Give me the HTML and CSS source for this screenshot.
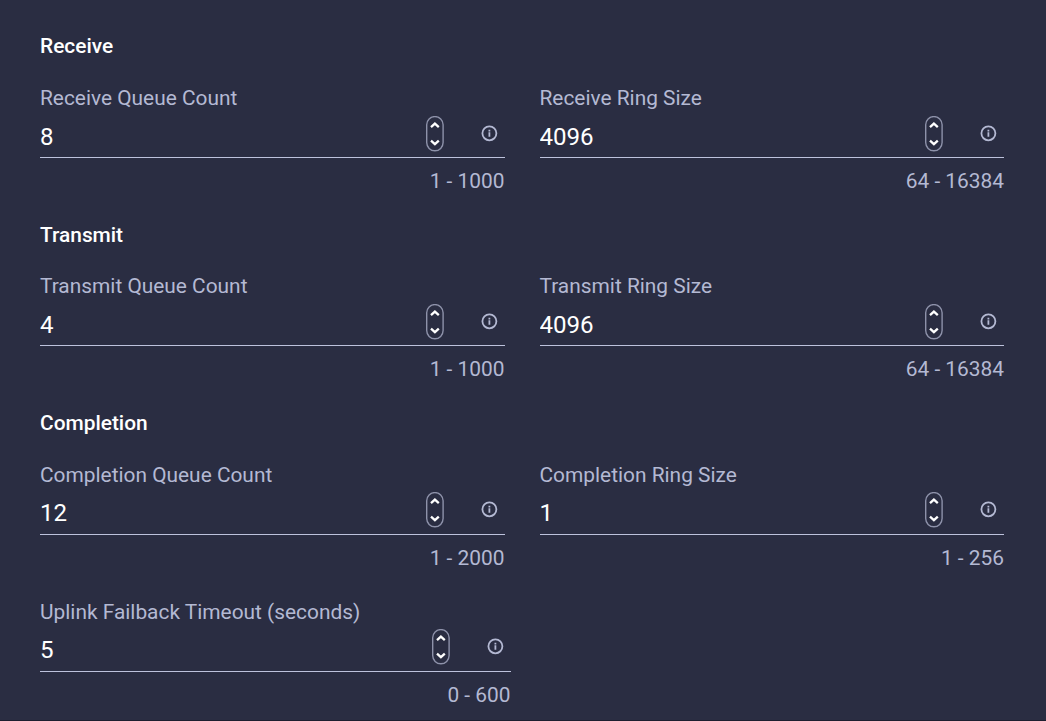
FILE: index.html
```html
<!DOCTYPE html>
<html lang="en">
<head>
    <meta charset="UTF-8">
    <meta name="viewport" content="width=device-width, initial-scale=1.0">
    <title>Adapter Settings</title>
    <link rel="stylesheet" href="styles.css">
</head>
<body>
    <!-- shared icons -->
    <svg class="sprite">
        <symbol id="spinner" viewBox="0 0 18 36">
            <rect x="0.7" y="0.6" width="16.4" height="34.2" rx="8.2" fill="none" stroke="#8e92aa" stroke-width="1.4"/>
            <path d="M5 11.2 L8.9 7.6 L12.8 11.2 M5 24.6 L8.9 28.2 L12.8 24.6" fill="none" stroke="#fff" stroke-width="2.3"/>
        </symbol>
        <symbol id="info" viewBox="0 0 16 16">
            <circle cx="7.4" cy="7.3" r="7" fill="none" stroke="#b4b9d3" stroke-width="1.8"/>
            <path d="M7.4 3.8 V5.4 M7.4 6.2 V10.8" fill="none" stroke="#b4b9d3" stroke-width="1.8"/>
        </symbol>
    </svg>

    <form class="settings">
        <section class="group">
            <h2>Receive</h2>
            <div class="row">
                <div class="field">
                    <label for="rxCount">Receive Queue Count</label>
                    <div class="control">
                        <input type="text" id="rxCount" value="8">
                        <svg class="spinner"><use href="#spinner"/></svg>
                        <svg class="info"><use href="#info"/></svg>
                    </div>
                    <div class="hint">1 - 1000</div>
                </div>
                <div class="field">
                    <label for="rxRing">Receive Ring Size</label>
                    <div class="control">
                        <input type="text" id="rxRing" value="4096">
                        <svg class="spinner"><use href="#spinner"/></svg>
                        <svg class="info"><use href="#info"/></svg>
                    </div>
                    <div class="hint">64 - 16384</div>
                </div>
            </div>
        </section>

        <section class="group">
            <h2>Transmit</h2>
            <div class="row">
                <div class="field">
                    <label for="txCount">Transmit Queue Count</label>
                    <div class="control">
                        <input type="text" id="txCount" value="4">
                        <svg class="spinner"><use href="#spinner"/></svg>
                        <svg class="info"><use href="#info"/></svg>
                    </div>
                    <div class="hint">1 - 1000</div>
                </div>
                <div class="field">
                    <label for="txRing">Transmit Ring Size</label>
                    <div class="control">
                        <input type="text" id="txRing" value="4096">
                        <svg class="spinner"><use href="#spinner"/></svg>
                        <svg class="info"><use href="#info"/></svg>
                    </div>
                    <div class="hint">64 - 16384</div>
                </div>
            </div>
        </section>

        <section class="group">
            <h2>Completion</h2>
            <div class="row">
                <div class="field">
                    <label for="cqCount">Completion Queue Count</label>
                    <div class="control">
                        <input type="text" id="cqCount" value="12">
                        <svg class="spinner"><use href="#spinner"/></svg>
                        <svg class="info"><use href="#info"/></svg>
                    </div>
                    <div class="hint">1 - 2000</div>
                </div>
                <div class="field">
                    <label for="cqRing">Completion Ring Size</label>
                    <div class="control">
                        <input type="text" id="cqRing" value="1">
                        <svg class="spinner"><use href="#spinner"/></svg>
                        <svg class="info"><use href="#info"/></svg>
                    </div>
                    <div class="hint">1 - 256</div>
                </div>
            </div>
        </section>

        <div class="field field-single">
            <label for="timeout">Uplink Failback Timeout (seconds)</label>
            <div class="control">
                <input type="text" id="timeout" value="5">
                <svg class="spinner"><use href="#spinner"/></svg>
                <svg class="info"><use href="#info"/></svg>
            </div>
            <div class="hint">0 - 600</div>
        </div>
    </form>
</body>
</html>
```
FILE: styles.css
```css
* {
    box-sizing: border-box;
}
body {
    margin: 0;
    height: 721px;
    overflow: hidden;
    background-color: #2a2d42;
    border-bottom: 1px solid #1d1f30;
    color: #ffffff;
    font-family: Roboto, sans-serif;
    font-size: 20.88px;
    line-height: 24px;
}
.sprite {
    display: none;
}
.settings {
    padding: 34.3px 42px 0 40px;
}
.group {
    margin-bottom: 29.5px;
}
h2 {
    margin: 0 0 27.8px;
    font-size: 20.88px;
    font-weight: 500;
    line-height: 24px;
}
.group:nth-of-type(3) {
    margin-bottom: 30px;
}
.row {
    display: grid;
    grid-template-columns: 1fr 1fr;
    gap: 35px;
}
label {
    display: block;
    color: #b4b9d3;
}
.control {
    display: flex;
    align-items: center;
    height: 48px;
    padding-right: 7px;
    border-bottom: 1px solid #bdc2dc;
}
input {
    flex: 1;
    min-width: 0;
    height: 100%;
    padding: 6px 0 0;
    border: 0;
    outline: 0;
    background: none;
    color: #ffffff;
    font: 24.1px Roboto, sans-serif;
}
.spinner {
    width: 18px;
    height: 36px;
    margin-right: 38px;
}
.info {
    width: 16px;
    height: 16px;
    overflow: visible;
}
#info {
    overflow: visible;
}
.hint {
    padding-top: 11px;
    color: #b4b9d3;
    text-align: right;
}
.field-single {
    width: 470.5px;
}
```
